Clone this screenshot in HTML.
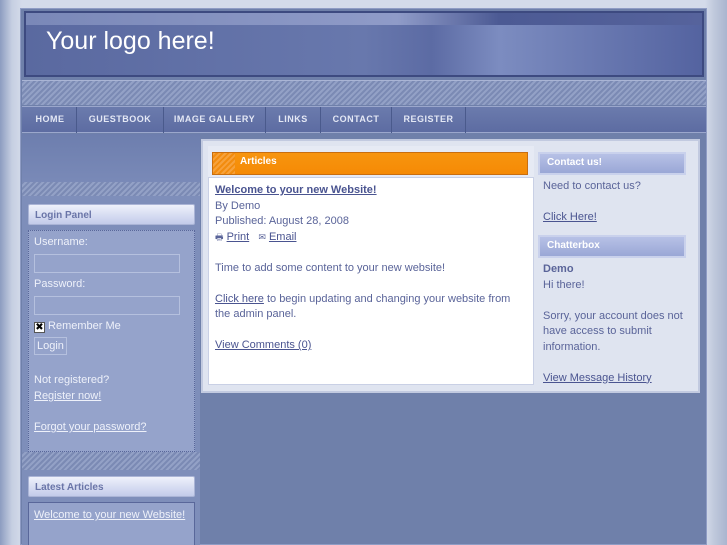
<!DOCTYPE html>
<html><head><meta charset="utf-8"><style>
*{margin:0;padding:0;box-sizing:border-box}
html,body{width:727px;height:545px;overflow:hidden}
body{position:relative;font-family:"Liberation Sans",sans-serif;font-size:11px;color:#5a6499;background:linear-gradient(90deg,#8c9cc0 0,#c6cfe2 12px,#d4dbea 22px,#d4dbea 705px,#c0c9dc 714px,#aab5cf 727px)}
.a{position:absolute}
a{color:#4a5490;text-decoration:underline}
.stripe{background:repeating-linear-gradient(135deg,#7b8ab4 0 2px,#93a1c6 2px 4px)}
.lnk{color:#eef1fa}
.hd{background:linear-gradient(180deg,#eef1fb,#c3cbea);border:1px solid #aab4d6;border-radius:2px;font-weight:bold;color:#6a75a8;font-size:10px;padding:5px 6px}
.hd2{background:linear-gradient(180deg,#b7c1e6,#9aa7d6);border:2px solid #c9d1ec;font-weight:bold;color:#fff;font-size:10px;padding:3px 7px}
.nav span{position:absolute;top:0;height:26px;line-height:25px;text-align:center;color:#e4e8f5;font-size:9px;font-weight:bold;letter-spacing:.5px;border-right:1px solid #4a5a8c}
.lp div{position:absolute;left:5px}
.inp{width:146px;height:19px;border:1px solid #b5c0de}
</style></head><body>
<div class="a" style="left:20px;top:8px;width:687px;height:537px;background:#6f80aa;border:1px solid #8f9cc4"></div>
<div class="a" style="left:24px;top:11px;width:680px;height:66px;border:2px solid #3d4a80;background:linear-gradient(90deg,#5a69a0 0,#6878ad 50%,#5c6ba4 60%,#7c8cc0 70%,#5463a0 100%)"></div>
<div class="a" style="left:26px;top:13px;width:676px;height:12px;background:linear-gradient(90deg,#7a88b8,#8f9bc8 55%,#4c5a94 70%,#56639c)"></div>
<div class="a" style="left:46px;top:27px;font-size:25px;color:#fff">Your logo here!</div>
<div class="a stripe" style="left:22px;top:80px;width:684px;height:25px;border-top:1px solid #aab5d5"></div>
<div class="a nav" style="left:22px;top:106px;width:684px;height:27px;background:linear-gradient(180deg,#6b7bad,#5d6ca2);border-top:1px solid #9ba7cc;border-bottom:1px solid #9ba7cc">
<span style="left:2px;width:53px">HOME</span>
<span style="left:55px;width:87px">GUESTBOOK</span>
<span style="left:142px;width:102px">IMAGE GALLERY</span>
<span style="left:244px;width:55px">LINKS</span>
<span style="left:299px;width:71px">CONTACT</span>
<span style="left:370px;width:74px">REGISTER</span>
</div>
<div class="a" style="left:22px;top:134px;width:178px;height:50px;background:linear-gradient(180deg,#6d7eae,#7a8ab8)"></div>
<div class="a stripe" style="left:22px;top:182px;width:178px;height:14px"></div>
<div class="a" style="left:22px;top:196px;width:178px;height:349px;background:#7e8eba"></div>
<div class="a hd" style="left:28px;top:204px;width:167px;height:21px">Login Panel</div>
<div class="a lp" style="left:28px;top:230px;width:167px;height:222px;background:#95a3cb;border:1px dotted #59679a;color:#eef1fa;font-size:11px">
<div style="top:5px">Username:</div>
<div class="inp" style="top:23px"></div>
<div style="top:47px">Password:</div>
<div class="inp" style="top:65px"></div>
<div style="top:89px"><span style="display:inline-block;width:11px;height:11px;background:#fff;border:1px solid #555;color:#000;font-size:10px;line-height:9px;text-align:center;vertical-align:-1px">✖</span> Remember Me</div>
<div style="top:106px;border:1px solid #b5c0de;padding:2px 2px">Login</div>
<div style="top:143px">Not registered?</div>
<div style="top:159px"><a class="lnk">Register now!</a></div>
<div style="top:190px"><a class="lnk">Forgot your password?</a></div>
</div>
<div class="a stripe" style="left:22px;top:452px;width:178px;height:18px"></div>
<div class="a hd" style="left:28px;top:476px;width:167px;height:21px">Latest Articles</div>
<div class="a" style="left:28px;top:502px;width:167px;height:43px;background:#95a3cb;border:1px solid #59679a;border-bottom:none;padding:6px 5px"><a class="lnk">Welcome to your new Website!</a></div>
<div class="a" style="left:201px;top:139px;width:499px;height:254px;background:#dfe4f0;border:2px solid #c2cae0"></div>
<div class="a" style="left:208px;top:146px;width:326px;height:239px;background:#fff;border:1px solid #c9d0e5"></div>
<div class="a" style="left:208px;top:146px;width:326px;height:32px;background:#e6eaf4;border-bottom:1px solid #c9d0e5"></div>
<div class="a" style="left:212px;top:152px;width:316px;height:23px;background:linear-gradient(180deg,#f7950f,#f58a05);border:1px solid #c86e10"></div>
<div class="a" style="left:213px;top:153px;width:22px;height:21px;background:repeating-linear-gradient(135deg,#f7a23c 0 2px,#f28c0f 2px 4px)"></div>
<div class="a" style="left:240px;top:156px;color:#fff;font-weight:bold;font-size:10px">Articles</div>
<div class="a" style="left:215px;top:183px;line-height:15.5px;font-size:11px;width:310px">
<a style="font-weight:bold">Welcome to your new Website!</a><br>By Demo<br>Published: August 28, 2008<br>
<span style="font-size:9px">🖶</span> <a>Print</a> &nbsp; <span style="font-size:9px">✉</span> <a>Email</a><br><br>
Time to add some content to your new website!<br><br>
<a>Click here</a> to begin updating and changing your website from the admin panel.<br><br>
<a>View Comments (0)</a></div>
<div class="a hd2" style="left:538px;top:152px;width:148px;height:23px">Contact us!</div>
<div class="a hd2" style="left:538px;top:235px;width:148px;height:23px">Chatterbox</div>
<div class="a" style="left:543px;top:179px;line-height:15.5px;font-size:11px;width:150px">Need to contact us?<br><br><a>Click Here!</a></div>
<div class="a" style="left:543px;top:262px;line-height:15.5px;font-size:11px;width:140px"><b>Demo</b><br>Hi there!<br><br>Sorry, your account does not have access to submit information.<br><br><a>View Message History</a></div>
</body></html>
